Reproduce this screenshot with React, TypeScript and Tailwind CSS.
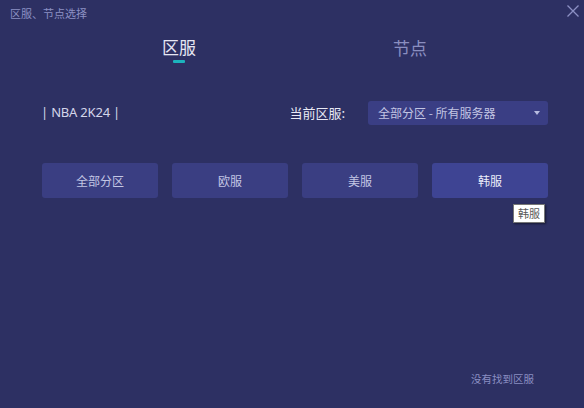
import React from "react";

const font = { fontFamily: '"Noto Sans CJK SC", "Noto Sans", sans-serif' };

export default function App() {
  const regions = ["全部分区", "欧服", "美服", "韩服"];
  return (
    <div className="w-[584px] h-[408px] bg-[#2d3063] relative overflow-hidden flex flex-col" style={font}>
      <div className="flex items-center justify-between h-[26px] pl-[10px] pr-[4px]">
        <span className="text-[11px] text-[#8c90c4] leading-none">区服、节点选择</span>
        <svg width="14" height="14" viewBox="0 0 14 14" className="mb-[4px]">
          <path d="M1.5 1.5 L12.5 12.5 M12.5 1.5 L1.5 12.5" stroke="#8c90c4" strokeWidth="1.3" />
        </svg>
      </div>
      <div className="flex h-[40px] mt-[8px]">
        <div className="w-[358px] flex flex-col items-center pt-[2px]">
          <span className="text-[17px] leading-[22px] text-[#e6e7f3]">区服</span>
          <div className="w-[12px] h-[3px] bg-[#1cb3bd] mt-[2px] rounded-[1px]" />
        </div>
        <div className="pl-[35px] pt-[2px]">
          <span className="text-[17px] leading-[22px] text-[#8a8ec0]">节点</span>
        </div>
      </div>
      <div className="flex items-center h-[24px] mt-[27px] pl-[41px] pr-[36px]">
        <span className="text-[13px] text-[#d4d6ea] tracking-[-0.2px]" style={{ fontFamily: '"Noto Sans", "Noto Sans CJK SC", sans-serif' }}>| NBA 2K24 |</span>
        <span className="ml-auto text-[13px] text-[#e8e9f4] mr-[23px]">当前区服:</span>
        <div className="w-[180px] h-[24px] bg-[#3a3e84] rounded-[3px] flex items-center pl-[10px] pr-[8px]">
          <span className="text-[12px] text-[#c2c5e3]">全部分区 - 所有服务器</span>
          <svg width="6" height="4" viewBox="0 0 6 4" className="ml-auto">
            <path d="M0 0 L6 0 L3 4 Z" fill="#b8bce0" />
          </svg>
        </div>
      </div>
      <div className="flex gap-[14px] pl-[42px] mt-[38px]">
        {regions.map((r, i) => (
          <div
            key={r}
            className={
              i === 3
                ? "w-[116px] h-[35px] rounded-[3px] bg-[#3e4493] flex items-center justify-center text-[12px] text-[#eceefa]"
                : "w-[116px] h-[35px] rounded-[3px] bg-[#3a3e82] flex items-center justify-center text-[12px] text-[#c3c6e4]"
            }
          >
            {r}
          </div>
        ))}
      </div>
      <div className="absolute left-[513px] top-[204px] w-[32px] h-[19px] bg-white border border-[#767676] shadow-[1px_1px_2px_rgba(0,0,0,0.5)] flex items-center justify-center text-[11px] text-[#575757]">
        韩服
      </div>
      <div className="mt-auto mb-[21px] pr-[50px] flex justify-end">
        <span className="text-[10.5px] text-[#8a8ec2]">没有找到区服</span>
      </div>
    </div>
  );
}
